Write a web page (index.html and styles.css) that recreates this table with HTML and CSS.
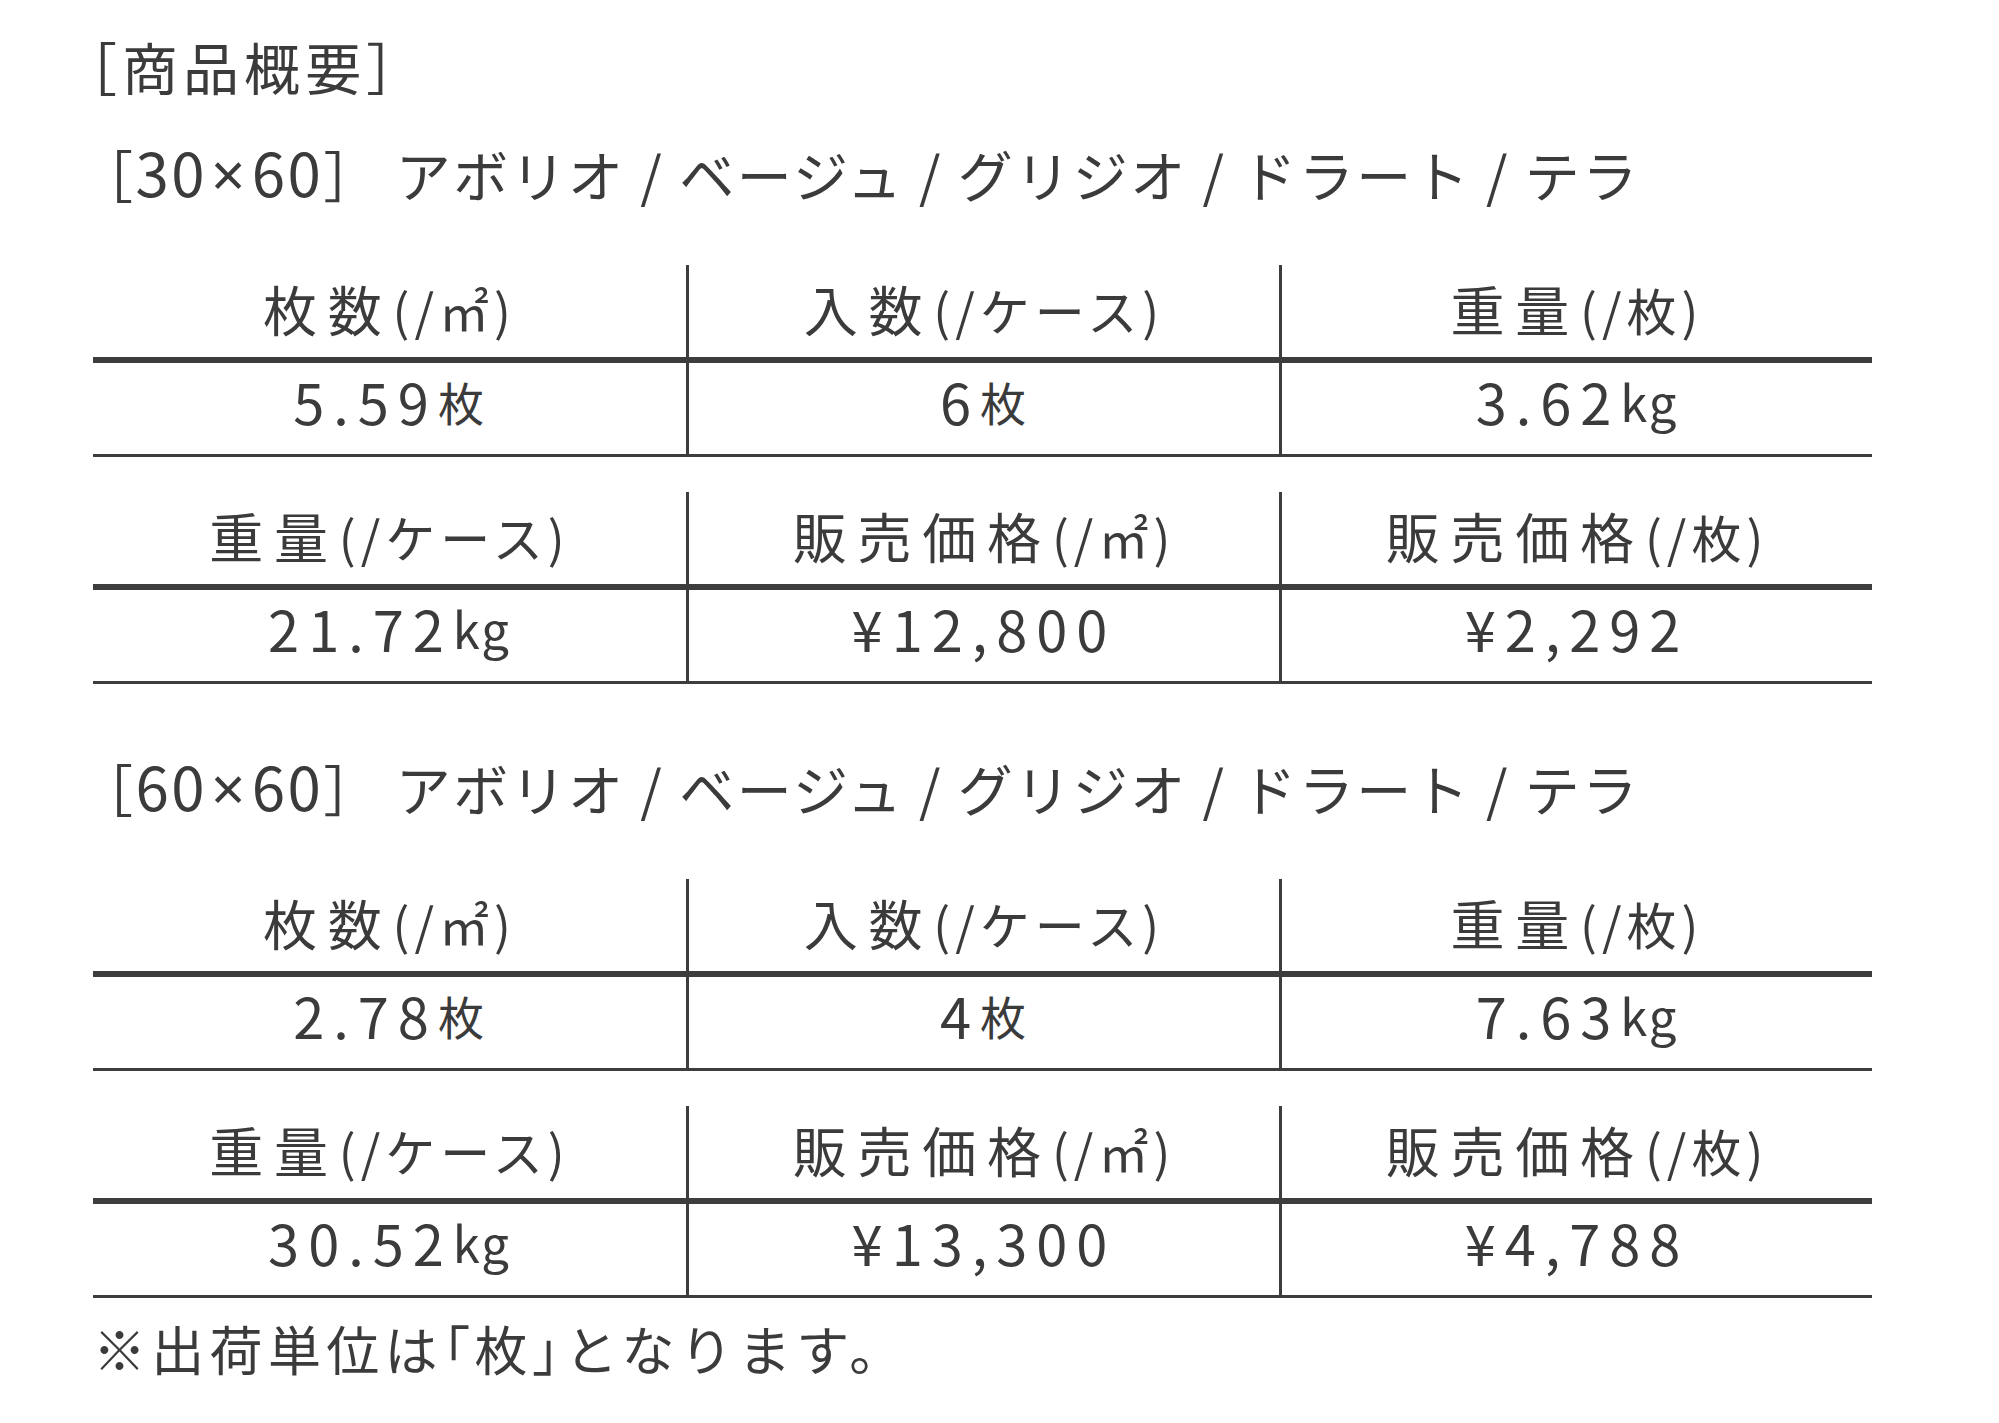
FILE: index.html
```html
<!DOCTYPE html>
<html lang="ja">
<head>
<meta charset="utf-8">
<title>商品概要</title>
<link rel="stylesheet" href="styles.css">
</head>
<body>
<main class="page">
  <h1 class="title">［商品概要］</h1>

  <section class="product">
    <h2 class="size">［<span class="dim">30<span class="times">×</span>60</span>］ アボリオ / ベージュ / グリジオ / ドラート / テラ</h2>
    <div class="spec">
      <div class="cell head">枚数<span class="sub">(/㎡)</span></div>
      <div class="cell head sep">入数<span class="sub">(/ケース)</span></div>
      <div class="cell head sep">重量<span class="sub">(/枚)</span></div>
      <div class="cell val">5.59<span class="unit">枚</span></div>
      <div class="cell val sep">6<span class="unit">枚</span></div>
      <div class="cell val sep">3.62<span class="unit kg">kg</span></div>
    </div>
    <div class="spec">
      <div class="cell head">重量<span class="sub">(/ケース)</span></div>
      <div class="cell head sep">販売価格<span class="sub">(/㎡)</span></div>
      <div class="cell head sep">販売価格<span class="sub">(/枚)</span></div>
      <div class="cell val">21.72<span class="unit kg">kg</span></div>
      <div class="cell val sep">¥12,800</div>
      <div class="cell val sep">¥2,292</div>
    </div>
  </section>

  <section class="product">
    <h2 class="size">［<span class="dim">60<span class="times">×</span>60</span>］ アボリオ / ベージュ / グリジオ / ドラート / テラ</h2>
    <div class="spec">
      <div class="cell head">枚数<span class="sub">(/㎡)</span></div>
      <div class="cell head sep">入数<span class="sub">(/ケース)</span></div>
      <div class="cell head sep">重量<span class="sub">(/枚)</span></div>
      <div class="cell val">2.78<span class="unit">枚</span></div>
      <div class="cell val sep">4<span class="unit">枚</span></div>
      <div class="cell val sep">7.63<span class="unit kg">kg</span></div>
    </div>
    <div class="spec">
      <div class="cell head">重量<span class="sub">(/ケース)</span></div>
      <div class="cell head sep">販売価格<span class="sub">(/㎡)</span></div>
      <div class="cell head sep">販売価格<span class="sub">(/枚)</span></div>
      <div class="cell val">30.52<span class="unit kg">kg</span></div>
      <div class="cell val sep">¥13,300</div>
      <div class="cell val sep">¥4,788</div>
    </div>
  </section>

  <p class="note">※出荷単位は<span class="quote">「枚」</span>となります。</p>
</main>
</body>
</html>
```

FILE: styles.css
```css
* { box-sizing: border-box; }

body {
  margin: 0;
  background: #ffffff;
  color: #3b3b3b;
  font-family: "Noto Sans CJK JP", "Noto Sans", sans-serif;
}

.page {
  padding: 31px 127px 0 93px;
}

.title {
  margin: 0 0 0 -32px;
  font-size: 56px;
  font-weight: 400;
  line-height: 70px;
  letter-spacing: 0.09em;
}

.product {
  margin-top: 32px;
}

.product + .product {
  margin-top: 63px;
}

.size {
  margin: 0 0 52px -15px;
  font-size: 55px;
  font-weight: 400;
  line-height: 80px;
  letter-spacing: 0.045em;
}

.dim {
  font-size: 60px;
  line-height: 1;
}

.times {
  font-family: "Noto Sans", sans-serif;
  line-height: 1;
  padding: 0 4px;
}

.spec {
  display: grid;
  grid-template-columns: repeat(3, 1fr);
}

.spec + .spec {
  margin-top: 35px;
}

.cell {
  display: flex;
  align-items: center;
  justify-content: center;
  white-space: nowrap;
}

.sep {
  border-left: 3px solid #3d3d3d;
}

.head {
  height: 98px;
  padding-bottom: 5px;
  border-bottom: 6px solid #3d3d3d;
  font-size: 54px;
  letter-spacing: 0.2em;
}

.sub {
  font-size: 50px;
  letter-spacing: 0.1em;
}

.val {
  height: 94px;
  padding-bottom: 16px;
  border-bottom: 3px solid #3d3d3d;
  font-size: 56px;
  letter-spacing: 0.16em;
}

.unit {
  font-size: 46px;
  letter-spacing: 0.04em;
}

.unit.kg {
  font-size: 49px;
}

.note {
  margin: 15px 0 0 0;
  font-size: 53px;
  line-height: 70px;
  letter-spacing: 0.1em;
}

.quote {
  font-feature-settings: "palt";
}
```
